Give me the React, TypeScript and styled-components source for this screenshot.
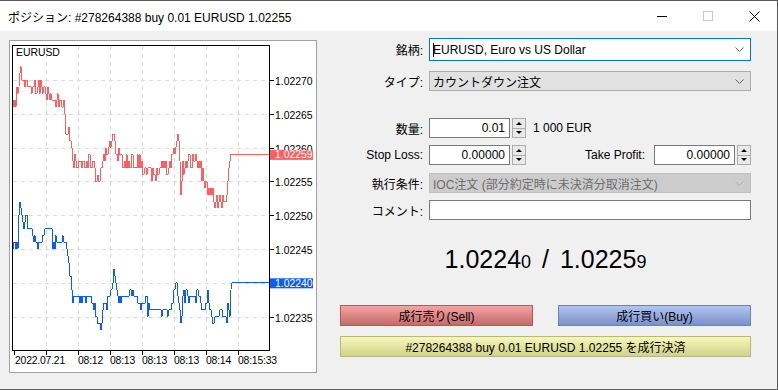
import React from "react";
import styled, { createGlobalStyle } from "styled-components";

const GlobalStyle = createGlobalStyle`
  html, body {
    margin: 0;
    padding: 0;
    background: #f0f0f0;
  }
  body {
    font-family: "Liberation Sans", "Noto Sans CJK JP", sans-serif;
    font-size: 12px;
    color: #000;
  }
`;

const Window = styled.div`
  width: 778px;
  height: 390px;
  box-sizing: border-box;
  border-top: 1px solid #5a5a5a;
  border-right: 1px solid #5a5a5a;
  border-bottom: 1px solid #5a5a5a;
  background: #f0f0f0;
  display: flex;
  flex-direction: column;
  overflow: hidden;
`;

const TitleBar = styled.div`
  height: 30px;
  flex-shrink: 0;
  background: #fff;
  display: flex;
  align-items: center;
  padding-left: 8px;
`;

const Title = styled.div`
  flex: 1;
  white-space: nowrap;
`;

const CaptionButton = styled.div`
  width: 46px;
  height: 30px;
  display: flex;
  align-items: center;
  justify-content: center;
`;

const Body = styled.div`
  flex: 1;
  display: flex;
  align-items: flex-start;
`;

const ChartPanel = styled.div`
  margin: 9px 0 0 9px;
  width: 308px;
  height: 333px;
  box-sizing: border-box;
  border: 1px solid #a0a0a0;
  background: #fff;
  display: flex;
`;

const FormPanel = styled.div`
  margin-left: 23px;
  padding-top: 7px;
  width: 411px;
  display: flex;
  flex-direction: column;
`;

const Row = styled.div<{ $top: number; $h: number }>`
  display: grid;
  grid-template-columns: 83px 322px;
  column-gap: 6px;
  align-items: center;
  margin-top: ${(p) => p.$top}px;
  height: ${(p) => p.$h}px;
`;

const Label = styled.div`
  text-align: right;
  white-space: nowrap;
`;

const Controls = styled.div`
  display: flex;
  align-items: center;
  height: 100%;
`;

const Select = styled.div<{ $variant: "focused" | "normal" | "disabled" }>`
  height: 100%;
  box-sizing: border-box;
  display: flex;
  align-items: center;
  padding: 0 6px 0 3px;
  white-space: nowrap;
  border: 1px solid
    ${(p) =>
      p.$variant === "focused" ? "#0078d7" : p.$variant === "normal" ? "#adadad" : "#bfbfbf"};
  background: ${(p) =>
    p.$variant === "focused" ? "#fff" : p.$variant === "normal" ? "#e1e1e1" : "#cccccc"};
  color: ${(p) => (p.$variant === "disabled" ? "#6d6d6d" : "#000")};
`;

const SelectText = styled.span`
  flex: 1;
  display: flex;
  align-items: center;
`;

const Caret = styled.span`
  display: inline-block;
  width: 1px;
  height: 14px;
  background: #000;
  margin-right: -1px;
`;

const Edit = styled.div<{ $w: number }>`
  width: ${(p) => p.$w}px;
  height: 100%;
  box-sizing: border-box;
  border: 1px solid #7a7a7a;
  background: #fff;
  display: flex;
  align-items: center;
  justify-content: flex-end;
  padding-right: 4px;
  flex-shrink: 0;
`;

const Spinner = styled.div`
  width: 14px;
  height: 20px;
  margin-left: 2px;
  box-sizing: border-box;
  border: 1px solid #adadad;
  background: #e9e9e9;
  display: flex;
  flex-direction: column;
  flex-shrink: 0;
`;

const SpinHalf = styled.div<{ $down?: boolean }>`
  flex: 1;
  display: flex;
  align-items: center;
  justify-content: center;
  border-top: ${(p) => (p.$down ? "1px solid #adadad" : "none")};
  &::after {
    content: "";
    width: 0;
    height: 0;
    border-left: 3px solid transparent;
    border-right: 3px solid transparent;
    ${(p) => (p.$down ? "border-top: 3px solid #000;" : "border-bottom: 3px solid #000;")}
  }
`;

const Note = styled.span`
  margin-left: 7px;
  white-space: nowrap;
`;

const InlineLabel = styled.div`
  flex: 1;
  text-align: right;
  margin-right: 9px;
  white-space: nowrap;
`;

const Quote = styled.div`
  margin-top: 24px;
  height: 30px;
  line-height: 30px;
  text-align: center;
  font-size: 25px;
  white-space: nowrap;
`;

const Small = styled.span`
  font-size: 18px;
`;

const Slash = styled.span`
  margin: 0 4px;
`;

const ButtonRow = styled.div`
  margin-top: 31px;
  display: grid;
  grid-template-columns: 1fr 1fr;
  column-gap: 25px;
`;

const tones = {
  sell: { top: "#f4a4a4", bottom: "#c46a6a", border: "#b25a5a" },
  buy: { top: "#b2c5ef", bottom: "#7a91c8", border: "#6b83bd" },
  close: { top: "#f7f7bb", bottom: "#d2d28c", border: "#b8b878" },
};

const ActionButton = styled.div<{ $tone: keyof typeof tones; $top?: number }>`
  height: 21px;
  box-sizing: border-box;
  margin-top: ${(p) => p.$top ?? 0}px;
  border: 1px solid ${(p) => tones[p.$tone].border};
  background: linear-gradient(${(p) => tones[p.$tone].top}, ${(p) => tones[p.$tone].bottom});
  display: flex;
  align-items: center;
  justify-content: center;
  white-space: nowrap;
`;

const Chevron = ({ color = "#606060" }: { color?: string }) => (
  <svg width="9" height="5" viewBox="0 0 9 5">
    <polyline points="0.5,0.5 4.5,4.5 8.5,0.5" fill="none" stroke={color} strokeWidth="1" />
  </svg>
);

// chart geometry: price -> y in page pixels
const STEP = 6.76;
const yOf = (p: number) => 80 + ((1.0227 - p) / 0.00001) * STEP;

const redPts: [number, number][] = [
  [13, 105], [16, 100], [20, 78], [22, 72], [25, 85], [28, 80], [32, 90], [38, 85],
  [44, 92], [48, 92], [52, 100], [56, 98], [62, 100], [64, 110], [66, 128], [70, 140],
  [73, 160], [78, 162], [85, 158], [92, 160], [95, 175], [99, 180], [102, 165], [106, 155],
  [110, 148], [114, 137], [117, 150], [122, 158], [130, 160], [140, 162], [146, 170],
  [150, 178], [156, 175], [162, 168], [170, 165], [175, 150], [178, 134], [180, 160],
  [181, 192], [183, 170], [188, 160], [195, 162], [200, 160], [203, 178], [207, 190],
  [212, 195], [216, 202], [220, 200], [224, 205], [227, 185], [230, 165], [232, 155],
];

const bluePts: [number, number][] = [
  [13, 249], [18, 249], [19, 215], [21, 208], [23, 222], [26, 215], [29, 228], [33, 232],
  [37, 242], [42, 242], [45, 229], [51, 229], [53, 242], [66, 242], [68, 255], [71, 275],
  [73, 300], [80, 297], [90, 298], [95, 305], [97, 320], [102, 322], [104, 305], [108, 298],
  [112, 290], [114, 270], [116, 285], [118, 297], [130, 297], [137, 298], [141, 308],
  [146, 300], [149, 310], [172, 310], [174, 298], [176, 277], [178, 295], [181, 317],
  [183, 298], [190, 298], [196, 296], [198, 283], [201, 300], [205, 310], [208, 298],
  [212, 317], [220, 317], [221, 307], [224, 317], [227, 317], [228, 305], [230, 317],
  [231, 290], [232, 283],
];

function buildPath(pts: [number, number][], noise: number, seed: number, endY: number) {
  let s = seed;
  const rand = () => {
    s = (Math.imul(s, 1664525) + 1013904223) >>> 0;
    return s / 4294967296;
  };
  const out: string[] = [];
  let j = 0;
  for (let x = 13; x < 232; x++) {
    while (j < pts.length - 2 && pts[j + 1][0] <= x) j++;
    const [x0, y0] = pts[j];
    const [x1, y1] = pts[j + 1];
    const y = y0 + ((y1 - y0) * (x - x0)) / Math.max(1, x1 - x0);
    let level = Math.round((y - 80) / STEP);
    const r = rand();
    if (r < noise) level -= 1;
    else if (r > 1 - noise) level += 1;
    const py = (80 + level * STEP).toFixed(1);
    out.push(`${x === 13 ? "M" : "L"}${x},${py}`);
  }
  out.push(`L232,${endY.toFixed(1)}`, `L269,${endY.toFixed(1)}`);
  return out.join(" ");
}

const priceLevels = ["1.02270", "1.02265", "1.02260", "1.02255", "1.02250", "1.02245", "1.02240", "1.02235"];
const vLines = [46, 78, 110, 142, 174, 206, 238];
const timeLabels: [number, string][] = [
  [15, "2022.07.21"], [78, "08:12"], [110, "08:13"], [142, "08:13"],
  [174, "08:13"], [206, "08:14"], [238, "08:15:33"],
];

const RED = "#ff5f5f";
const BLUE = "#0a5cff";

const Chart = () => {
  const askY = yOf(1.02259);
  const bidY = yOf(1.0224);
  const redPath = buildPath(redPts, 0.3, 7, askY);
  const bluePath = buildPath(bluePts, 0.12, 31, bidY);
  return (
    <svg
      width="306"
      height="331"
      viewBox="10 41 306 331"
      fontFamily="'Liberation Sans', sans-serif"
      fontSize="10.4"
    >
      {priceLevels.map((p) => {
        const y = Math.round(yOf(parseFloat(p))) + 0.5;
        return (
          <g key={p}>
            <line x1="13" x2="269" y1={y} y2={y} stroke="#d9d9d9" strokeDasharray="4 4" />
            <line x1="269" x2="274" y1={y} y2={y} stroke="#000" />
            <text x="275" y={y + 4} fill="#000">{p}</text>
          </g>
        );
      })}
      {vLines.map((x) => (
        <g key={x}>
          <line x1={x + 0.5} x2={x + 0.5} y1="46" y2="350" stroke="#d9d9d9" strokeDasharray="4 4" />
          <line x1={x + 0.5} x2={x + 0.5} y1="350" y2="355" stroke="#000" />
        </g>
      ))}
      <line x1="14.5" x2="14.5" y1="350" y2="355" stroke="#000" />
      <rect x="12.5" y="45.5" width="257" height="305" fill="none" stroke="#000" />
      <text x="16" y="56" fill="#000">EURUSD</text>
      <path d={redPath} fill="none" stroke={RED} strokeWidth="1" shapeRendering="crispEdges" />
      <path d={bluePath} fill="none" stroke={BLUE} strokeWidth="1" shapeRendering="crispEdges" />
      <rect x="270" y={askY - 4.5} width="43" height="10" fill={RED} />
      <text x="275" y={askY + 4} fill="#fff">1.02259</text>
      <rect x="270" y={bidY - 4.5} width="43" height="10" fill={BLUE} />
      <text x="275" y={bidY + 4} fill="#fff">1.02240</text>
      {timeLabels.map(([x, t], i) => (
        <text key={i} x={x} y="364" fill="#000" letterSpacing="-0.2">{t}</text>
      ))}
    </svg>
  );
};

export default function App() {
  return (
    <>
      <GlobalStyle />
      <Window>
        <TitleBar>
          <Title>ポジション: #278264388 buy 0.01 EURUSD 1.02255</Title>
          <CaptionButton>
            <svg width="10" height="10" viewBox="0 0 10 10">
              <line x1="0" x2="10" y1="5.5" y2="5.5" stroke="#000" />
            </svg>
          </CaptionButton>
          <CaptionButton>
            <svg width="10" height="10" viewBox="0 0 10 10">
              <rect x="0.5" y="0.5" width="9" height="9" fill="none" stroke="#c8c8c8" />
            </svg>
          </CaptionButton>
          <CaptionButton>
            <svg width="11" height="11" viewBox="0 0 11 11">
              <path d="M0.5 0.5 L10.5 10.5 M10.5 0.5 L0.5 10.5" stroke="#000" strokeWidth="1" />
            </svg>
          </CaptionButton>
        </TitleBar>
        <Body>
          <ChartPanel>
            <Chart />
          </ChartPanel>
          <FormPanel>
            <Row $top={0} $h={23}>
              <Label>銘柄:</Label>
              <Select $variant="focused">
                <SelectText>
                  <Caret />
                  EURUSD, Euro vs US Dollar
                </SelectText>
                <Chevron />
              </Select>
            </Row>
            <Row $top={10} $h={20}>
              <Label>タイプ:</Label>
              <Select $variant="normal">
                <SelectText>カウントダウン注文</SelectText>
                <Chevron />
              </Select>
            </Row>
            <Row $top={27} $h={20}>
              <Label>数量:</Label>
              <Controls>
                <Edit $w={81}>0.01</Edit>
                <Spinner>
                  <SpinHalf />
                  <SpinHalf $down />
                </Spinner>
                <Note>1 000 EUR</Note>
              </Controls>
            </Row>
            <Row $top={7} $h={20}>
              <Label>Stop Loss:</Label>
              <Controls>
                <Edit $w={81}>0.00000</Edit>
                <Spinner>
                  <SpinHalf />
                  <SpinHalf $down />
                </Spinner>
                <InlineLabel>Take Profit:</InlineLabel>
                <Edit $w={81}>0.00000</Edit>
                <Spinner>
                  <SpinHalf />
                  <SpinHalf $down />
                </Spinner>
              </Controls>
            </Row>
            <Row $top={8} $h={20}>
              <Label>執行条件:</Label>
              <Select $variant="disabled">
                <SelectText>IOC注文 (部分約定時に未決済分取消注文)</SelectText>
                <Chevron color="#b0b0b0" />
              </Select>
            </Row>
            <Row $top={7} $h={20}>
              <Label>コメント:</Label>
              <Edit $w={322} />
            </Row>
            <Quote>
              1.0224<Small>0</Small>{" "}
              <Slash>/</Slash>{" "}
              1.0225<Small>9</Small>
            </Quote>
            <ButtonRow>
              <ActionButton $tone="sell">成行売り(Sell)</ActionButton>
              <ActionButton $tone="buy">成行買い(Buy)</ActionButton>
            </ButtonRow>
            <ActionButton $tone="close" $top={10}>
              #278264388 buy 0.01 EURUSD 1.02255 を成行決済
            </ActionButton>
          </FormPanel>
        </Body>
      </Window>
    </>
  );
}
